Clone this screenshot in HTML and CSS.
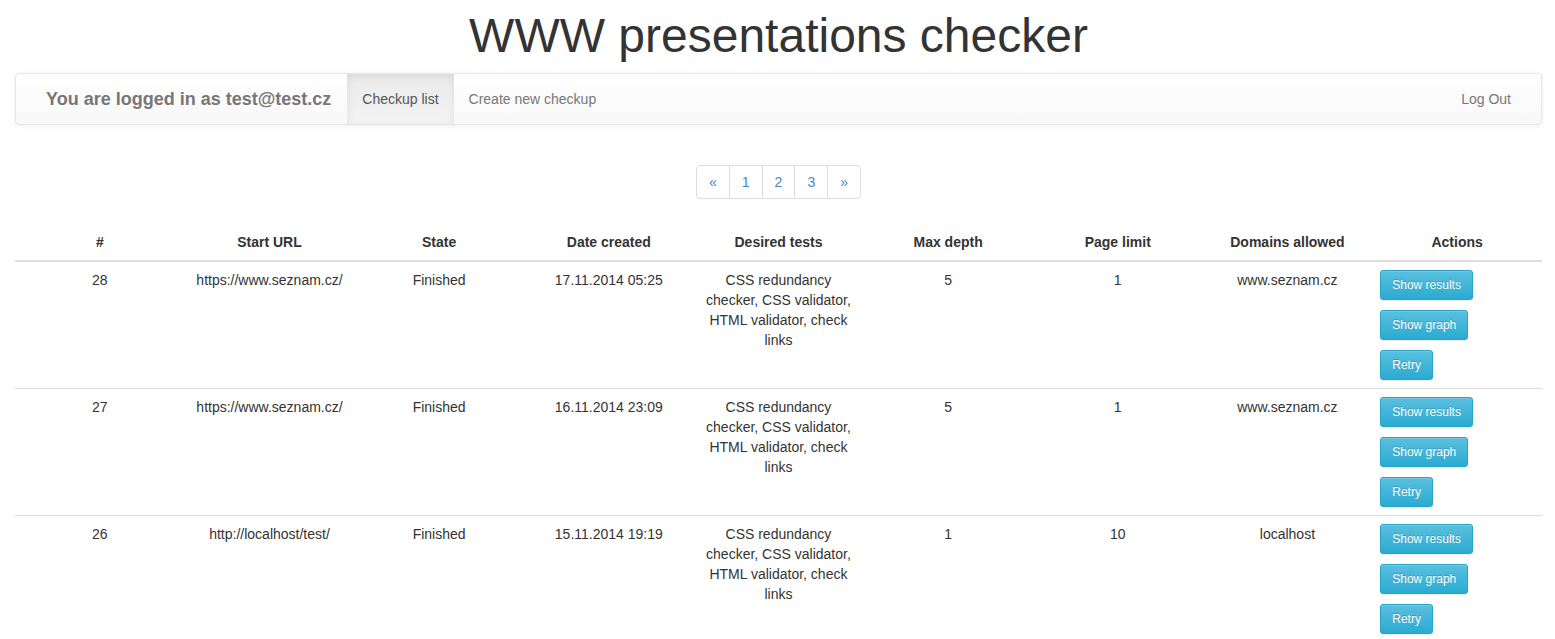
FILE: index.html
```html
<!DOCTYPE html>
<html lang="en">
<head>
<meta charset="utf-8">
<title>WWW presentations checker</title>
<link rel="stylesheet" href="styles.css">
</head>
<body>
<div class="container">
  <h1 class="title">WWW presentations checker</h1>
  <nav class="navbar">
    <span class="brand">You are logged in as test@test.cz</span>
    <ul class="nav">
      <li class="active"><a href="#">Checkup list</a></li>
      <li><a href="#">Create new checkup</a></li>
    </ul>
    <ul class="nav nav-right">
      <li><a href="#">Log Out</a></li>
    </ul>
  </nav>
  <div class="pager-wrap">
    <ul class="pagination">
      <li><a href="#">&laquo;</a></li>
      <li><a href="#">1</a></li>
      <li><a href="#">2</a></li>
      <li><a href="#">3</a></li>
      <li><a href="#">&raquo;</a></li>
    </ul>
  </div>
  <table class="table">
    <thead>
      <tr>
        <th>#</th><th>Start URL</th><th>State</th><th>Date created</th><th>Desired tests</th><th>Max depth</th><th>Page limit</th><th>Domains allowed</th><th>Actions</th>
      </tr>
    </thead>
    <tbody>
      <tr>
        <td>28</td><td>https://www.seznam.cz/</td><td>Finished</td><td>17.11.2014 05:25</td>
        <td>CSS redundancy checker, CSS validator, HTML validator, check links</td>
        <td>5</td><td>1</td><td>www.seznam.cz</td>
        <td class="actions"><div class="btns"><a class="btn" href="#">Show results</a><a class="btn" href="#">Show graph</a><a class="btn" href="#">Retry</a></div></td>
      </tr>
      <tr>
        <td>27</td><td>https://www.seznam.cz/</td><td>Finished</td><td>16.11.2014 23:09</td>
        <td>CSS redundancy checker, CSS validator, HTML validator, check links</td>
        <td>5</td><td>1</td><td>www.seznam.cz</td>
        <td class="actions"><div class="btns"><a class="btn" href="#">Show results</a><a class="btn" href="#">Show graph</a><a class="btn" href="#">Retry</a></div></td>
      </tr>
      <tr>
        <td>26</td><td>http://localhost/test/</td><td>Finished</td><td>15.11.2014 19:19</td>
        <td>CSS redundancy checker, CSS validator, HTML validator, check links</td>
        <td>1</td><td>10</td><td>localhost</td>
        <td class="actions"><div class="btns"><a class="btn" href="#">Show results</a><a class="btn" href="#">Show graph</a><a class="btn" href="#">Retry</a></div></td>
      </tr>
    </tbody>
  </table>
</div>
</body>
</html>
```
FILE: styles.css
```css
* { box-sizing: border-box; }
html, body { margin: 0; padding: 0; }
body {
  font-family: "Liberation Sans", Arial, Helvetica, sans-serif;
  font-size: 14px;
  line-height: 20px;
  color: #333;
  background: #fff;
}
a { text-decoration: none; }
.container { padding: 0 13px 0 15px; }

.title {
  margin: 10px 0 10px;
  font-size: 48px;
  line-height: 1.1;
  font-weight: normal;
  text-align: center;
  color: #333;
}

.navbar {
  display: flex;
  align-items: stretch;
  height: 52px;
  padding: 0 15px;
  margin-bottom: 20px;
  border: 1px solid #e7e7e7;
  border-radius: 4px;
  background: linear-gradient(to bottom, #fff 0, #f8f8f8 100%);
  box-shadow: inset 0 1px 0 rgba(255,255,255,.15), 0 1px 5px rgba(0,0,0,.075);
}
.brand {
  padding: 15px 16px 15px 15px;
  font-size: 18px;
  font-weight: bold;
  line-height: 20px;
  color: #777;
}
.nav {
  display: flex;
  list-style: none;
  margin: 0;
  padding: 0;
}
.nav li a {
  display: block;
  padding: 15px;
  line-height: 20px;
  color: #777;
}
.nav li.active a {
  color: #555;
  background: linear-gradient(to bottom, #ebebeb 0, #f3f3f3 100%);
  box-shadow: inset 0 3px 9px rgba(0,0,0,.075);
}
.nav-right { margin-left: auto; margin-right: 0; }

.pager-wrap { text-align: center; }
.pagination {
  display: inline-flex;
  list-style: none;
  padding: 0;
  margin: 20px 0 25px;
  border-radius: 4px;
}
.pagination li a {
  display: block;
  padding: 6px 12px;
  line-height: 20px;
  color: #428bca;
  background: #fff;
  border: 1px solid #ddd;
  margin-left: -1px;
}
.pagination li:first-child a { margin-left: 0; border-radius: 4px 0 0 4px; }
.pagination li:last-child a { border-radius: 0 4px 4px 0; }

.table {
  width: 100%;
  table-layout: fixed;
  border-collapse: collapse;
  border-spacing: 0;
}
.table th, .table td {
  padding: 8px;
  line-height: 20px;
  text-align: center;
  vertical-align: top;
}
.table th {
  font-weight: bold;
  border-bottom: 2px solid #ddd;
}
.table td { border-top: 1px solid #ddd; }
.table td.actions { text-align: left; }

.btns {
  display: flex;
  flex-direction: column;
  align-items: flex-start;
  gap: 10px;
}
.btn {
  display: inline-block;
  padding: 5px 11px;
  font-size: 12px;
  line-height: 18px;
  color: #fff;
  border: 1px solid #28a4c9;
  border-radius: 3px;
  background: linear-gradient(to bottom, #5bc0de 0, #2aabd2 100%);
  text-shadow: 0 -1px 0 rgba(0,0,0,.2);
  box-shadow: inset 0 1px 0 rgba(255,255,255,.15), 0 1px 1px rgba(0,0,0,.075);
}
```
